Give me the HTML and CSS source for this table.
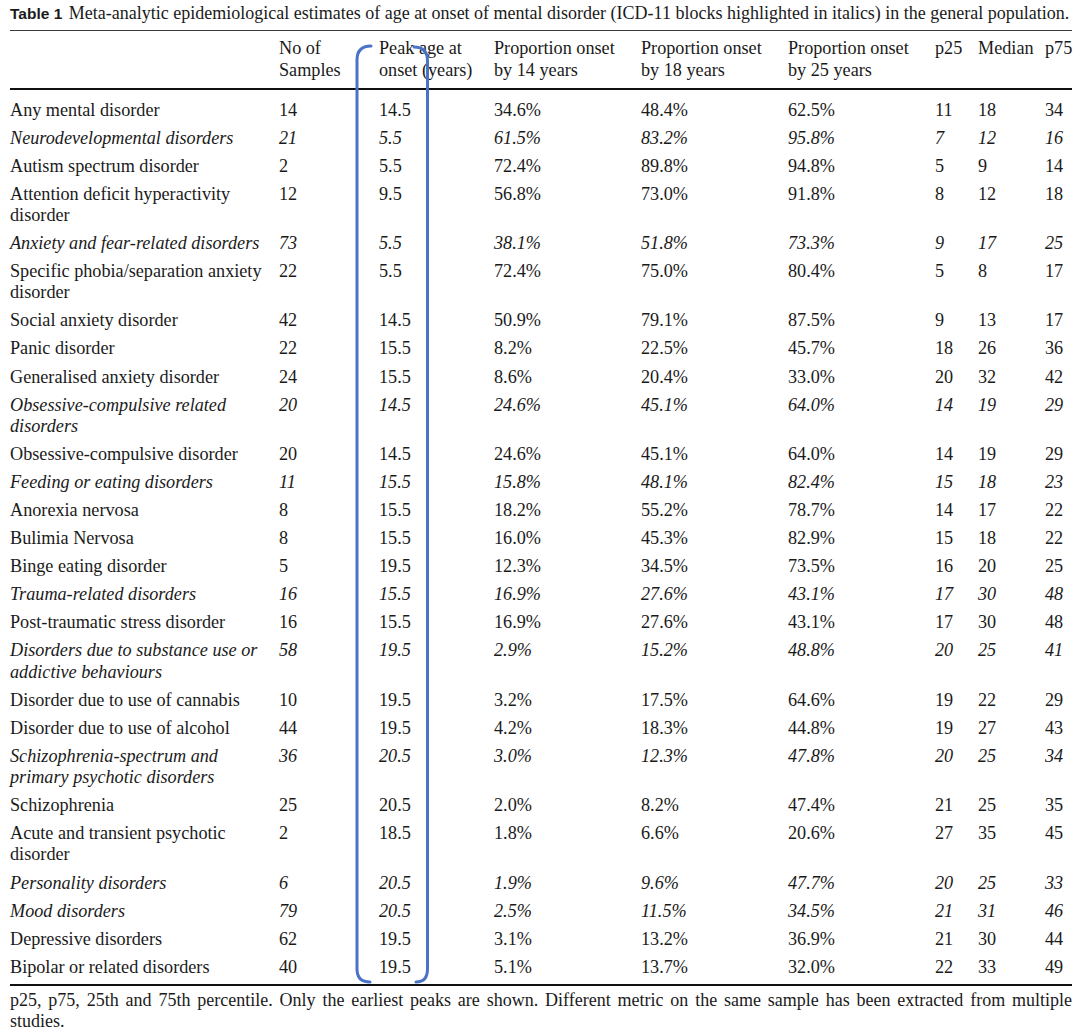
FILE: index.html
```html
<!DOCTYPE html>
<html>
<head>
<meta charset="utf-8">
<link rel="stylesheet" href="styles.css">
</head>
<body>
<div class="page">
  <p class="caption"><span class="tlabel">Table 1</span> Meta-analytic epidemiological estimates of age at onset of mental disorder (ICD-11 blocks highlighted in italics) in the general population.</p>
  <table class="data">
    <colgroup>
      <col class="c-label"><col class="c-n"><col class="c-peak"><col class="c-p"><col class="c-p"><col class="c-p"><col class="c-q25"><col class="c-med"><col class="c-q75">
    </colgroup>
    <thead>
      <tr>
        <th></th>
        <th>No of<br>Samples</th>
        <th>Peak age at<br>onset (years)</th>
        <th>Proportion onset<br>by 14 years</th>
        <th>Proportion onset<br>by 18 years</th>
        <th>Proportion onset<br>by 25 years</th>
        <th>p25</th>
        <th>Median</th>
        <th>p75</th>
      </tr>
    </thead>
    <tbody>
      <tr><td>Any mental disorder</td><td>14</td><td>14.5</td><td>34.6%</td><td>48.4%</td><td>62.5%</td><td>11</td><td>18</td><td>34</td></tr>
      <tr class="blk"><td>Neurodevelopmental disorders</td><td>21</td><td>5.5</td><td>61.5%</td><td>83.2%</td><td>95.8%</td><td>7</td><td>12</td><td>16</td></tr>
      <tr><td>Autism spectrum disorder</td><td>2</td><td>5.5</td><td>72.4%</td><td>89.8%</td><td>94.8%</td><td>5</td><td>9</td><td>14</td></tr>
      <tr><td>Attention deficit hyperactivity<br>disorder</td><td>12</td><td>9.5</td><td>56.8%</td><td>73.0%</td><td>91.8%</td><td>8</td><td>12</td><td>18</td></tr>
      <tr class="blk"><td>Anxiety and fear-related disorders</td><td>73</td><td>5.5</td><td>38.1%</td><td>51.8%</td><td>73.3%</td><td>9</td><td>17</td><td>25</td></tr>
      <tr><td>Specific phobia/separation anxiety<br>disorder</td><td>22</td><td>5.5</td><td>72.4%</td><td>75.0%</td><td>80.4%</td><td>5</td><td>8</td><td>17</td></tr>
      <tr><td>Social anxiety disorder</td><td>42</td><td>14.5</td><td>50.9%</td><td>79.1%</td><td>87.5%</td><td>9</td><td>13</td><td>17</td></tr>
      <tr><td>Panic disorder</td><td>22</td><td>15.5</td><td>8.2%</td><td>22.5%</td><td>45.7%</td><td>18</td><td>26</td><td>36</td></tr>
      <tr><td>Generalised anxiety disorder</td><td>24</td><td>15.5</td><td>8.6%</td><td>20.4%</td><td>33.0%</td><td>20</td><td>32</td><td>42</td></tr>
      <tr class="blk"><td>Obsessive-compulsive related<br>disorders</td><td>20</td><td>14.5</td><td>24.6%</td><td>45.1%</td><td>64.0%</td><td>14</td><td>19</td><td>29</td></tr>
      <tr><td>Obsessive-compulsive disorder</td><td>20</td><td>14.5</td><td>24.6%</td><td>45.1%</td><td>64.0%</td><td>14</td><td>19</td><td>29</td></tr>
      <tr class="blk"><td>Feeding or eating disorders</td><td>11</td><td>15.5</td><td>15.8%</td><td>48.1%</td><td>82.4%</td><td>15</td><td>18</td><td>23</td></tr>
      <tr><td>Anorexia nervosa</td><td>8</td><td>15.5</td><td>18.2%</td><td>55.2%</td><td>78.7%</td><td>14</td><td>17</td><td>22</td></tr>
      <tr><td>Bulimia Nervosa</td><td>8</td><td>15.5</td><td>16.0%</td><td>45.3%</td><td>82.9%</td><td>15</td><td>18</td><td>22</td></tr>
      <tr><td>Binge eating disorder</td><td>5</td><td>19.5</td><td>12.3%</td><td>34.5%</td><td>73.5%</td><td>16</td><td>20</td><td>25</td></tr>
      <tr class="blk"><td>Trauma-related disorders</td><td>16</td><td>15.5</td><td>16.9%</td><td>27.6%</td><td>43.1%</td><td>17</td><td>30</td><td>48</td></tr>
      <tr><td>Post-traumatic stress disorder</td><td>16</td><td>15.5</td><td>16.9%</td><td>27.6%</td><td>43.1%</td><td>17</td><td>30</td><td>48</td></tr>
      <tr class="blk"><td>Disorders due to substance use or<br>addictive behaviours</td><td>58</td><td>19.5</td><td>2.9%</td><td>15.2%</td><td>48.8%</td><td>20</td><td>25</td><td>41</td></tr>
      <tr><td>Disorder due to use of cannabis</td><td>10</td><td>19.5</td><td>3.2%</td><td>17.5%</td><td>64.6%</td><td>19</td><td>22</td><td>29</td></tr>
      <tr><td>Disorder due to use of alcohol</td><td>44</td><td>19.5</td><td>4.2%</td><td>18.3%</td><td>44.8%</td><td>19</td><td>27</td><td>43</td></tr>
      <tr class="blk"><td>Schizophrenia-spectrum and<br>primary psychotic disorders</td><td>36</td><td>20.5</td><td>3.0%</td><td>12.3%</td><td>47.8%</td><td>20</td><td>25</td><td>34</td></tr>
      <tr><td>Schizophrenia</td><td>25</td><td>20.5</td><td>2.0%</td><td>8.2%</td><td>47.4%</td><td>21</td><td>25</td><td>35</td></tr>
      <tr><td>Acute and transient psychotic<br>disorder</td><td>2</td><td>18.5</td><td>1.8%</td><td>6.6%</td><td>20.6%</td><td>27</td><td>35</td><td>45</td></tr>
      <tr class="blk"><td>Personality disorders</td><td>6</td><td>20.5</td><td>1.9%</td><td>9.6%</td><td>47.7%</td><td>20</td><td>25</td><td>33</td></tr>
      <tr class="blk"><td>Mood disorders</td><td>79</td><td>20.5</td><td>2.5%</td><td>11.5%</td><td>34.5%</td><td>21</td><td>31</td><td>46</td></tr>
      <tr><td>Depressive disorders</td><td>62</td><td>19.5</td><td>3.1%</td><td>13.2%</td><td>36.9%</td><td>21</td><td>30</td><td>44</td></tr>
      <tr><td>Bipolar or related disorders</td><td>40</td><td>19.5</td><td>5.1%</td><td>13.7%</td><td>32.0%</td><td>22</td><td>33</td><td>49</td></tr>
    </tbody>
  </table>
  <p class="note">p25, p75, 25th and 75th percentile. Only the earliest peaks are shown. Different metric on the same sample has been extracted from multiple studies.</p>
  <svg class="bracket" width="1080" height="1032" viewBox="0 0 1080 1032" aria-hidden="true">
    <path d="M371 46 Q357 46 357 60 L357 969 Q357 982 370 982" />
    <path d="M414 47 Q427.5 47 427.5 61 L427.5 969 Q427.5 982 416 982" />
  </svg>
</div>
</body>
</html>
```
FILE: styles.css
```css
html, body {
  margin: 0;
  padding: 0;
  background: #ffffff;
}
.page {
  position: relative;
  width: 1062px;
  padding: 0 8px 0 10px;
  font-family: "Liberation Serif", "Times New Roman", serif;
  font-size: 18.2px;
  color: #1a1a1a;
}
.caption {
  margin: 0;
  padding: 3px 0 6px;
  line-height: 21px;
  border-bottom: 1.5px solid #3a3a3a;
  white-space: nowrap;
  font-size: 18px;
}
.tlabel {
  font-family: "Liberation Sans", Arial, sans-serif;
  font-weight: bold;
  font-size: 15.5px;
  margin-right: 2px;
}
.data {
  width: 1062px;
  table-layout: fixed;
  border-collapse: collapse;
  border-bottom: 2px solid #111;
}
.c-label { width: 269px; }
.c-n { width: 100px; }
.c-peak { width: 115px; }
.c-p { width: 147px; }
.c-q25 { width: 43px; }
.c-med { width: 67px; }
.c-q75 { width: 27px; }
.data th {
  font-weight: normal;
  text-align: left;
  vertical-align: top;
  line-height: 22px;
  padding: 5.5px 0 7px;
  border-bottom: 2px solid #111;
  white-space: nowrap;
}
.data td {
  text-align: left;
  vertical-align: top;
  line-height: 21.2px;
  padding: 3.45px 0;
  white-space: nowrap;
}
.data tbody tr:first-child td {
  padding-top: 10px;
}
.data tbody tr:last-child td {
  padding-bottom: 6.5px;
}
.blk td {
  font-style: italic;
}
.note {
  margin: 0;
  padding: 4px 0 0;
  line-height: 21px;
  text-align: justify;
  font-size: 18px;
}
.bracket {
  position: absolute;
  left: 0;
  top: 0;
  pointer-events: none;
}
.bracket path {
  fill: none;
  stroke: #4a73c8;
  stroke-width: 3;
  stroke-linecap: round;
}
```
